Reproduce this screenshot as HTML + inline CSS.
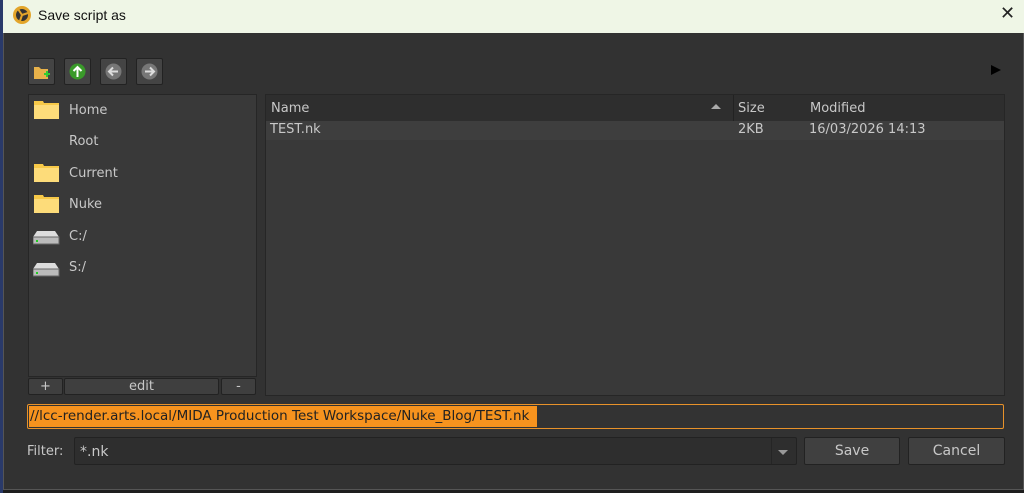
<!DOCTYPE html>
<html><head><style>
*{margin:0;padding:0;box-sizing:border-box}
body{width:1024px;height:493px;overflow:hidden;background:#1e1e1e;font-family:"DejaVu Sans",sans-serif;position:relative}
.a{position:absolute}
.t{font-size:13px;color:#c8c8c8}
.btn{background:#3f3f3f;border:1px solid #222;border-radius:2px}
</style></head><body>
<div class="a" style="left:0;top:0;width:3px;height:493px;background:#2a3a6a"></div>
<div class="a" style="left:3px;top:0;width:1021px;height:490px;background:#323232;border:1px solid #555;border-top:none"></div>
<div class="a" style="left:3px;top:0;width:1021px;height:33px;background:#eff6e6"></div>
<svg class="a" style="left:12px;top:5px" width="20" height="20"><circle cx="10" cy="10" r="9" fill="#e3a52a"/><circle cx="10" cy="10" r="6" fill="#333"/><path d="M10 10 L6 4 M10 10 L16 8 M10 10 L8 16" stroke="#e3a52a" stroke-width="2"/></svg>
<div class="a" style="left:38px;top:7px;font-size:14px;color:#111;font-family:'Liberation Sans',sans-serif">Save script as</div>
<div class="a" style="left:1000px;top:3px;font-size:18px;color:#222;font-weight:300">✕</div>
<div class="a btn" style="left:28px;top:58px;width:27px;height:27px;background:#444"><svg width="25" height="25"><path d="M5 8h5l2 2h7v10H5z" fill="#e8b24a"/><path d="M15 15h6M18 12v6" stroke="#3c3" stroke-width="2"/></svg></div>
<div class="a btn" style="left:64px;top:58px;width:27px;height:27px;background:#444"><svg width="25" height="25"><circle cx="12.5" cy="12.5" r="8" fill="#3a9a2a"/><path d="M12.5 18V8M8.5 12l4-4 4 4" stroke="#fff" stroke-width="2" fill="none"/></svg></div>
<div class="a btn" style="left:100px;top:58px;width:27px;height:27px;background:#444"><svg width="25" height="25"><circle cx="12.5" cy="12.5" r="8" fill="#777"/><path d="M17 12.5H8M12 8.5l-4 4 4 4" stroke="#ddd" stroke-width="2" fill="none"/></svg></div>
<div class="a btn" style="left:136px;top:58px;width:27px;height:27px;background:#444"><svg width="25" height="25"><circle cx="12.5" cy="12.5" r="8" fill="#777"/><path d="M8 12.5h9M13 8.5l4 4-4 4" stroke="#ddd" stroke-width="2" fill="none"/></svg></div>
<div class="a" style="left:991px;top:65px;width:0;height:0;border-left:10px solid #000;border-top:5px solid transparent;border-bottom:5px solid transparent"></div>
<div class="a" style="left:28px;top:94px;width:229px;height:283px;background:#393939;border:1px solid #262626"></div>
<svg class="a" style="left:33px;top:99px" width="28" height="160">
<g id="f"><path d="M1 2h9l1 2h15v16H1z" fill="#f7c948"/><path d="M1 6h25v14H1z" fill="#fddc7a"/></g>
<use href="#f" y="63"/><use href="#f" y="94"/>
</svg>
<svg class="a" style="left:33px;top:228px" width="28" height="60">
<g id="d"><path d="M4 3h18l4 6v6H0V9z" fill="#ddd"/><rect x="0" y="9" width="26" height="7" fill="#bbb" stroke="#666"/><rect x="3" y="12" width="2" height="2" fill="#2c2"/></g>
<use href="#d" y="32"/>
</svg>
<div class="a t" style="left:69px;top:103px">Home</div>
<div class="a t" style="left:69px;top:134px">Root</div>
<div class="a t" style="left:69px;top:166px">Current</div>
<div class="a t" style="left:69px;top:197px">Nuke</div>
<div class="a t" style="left:69px;top:229px">C:/</div>
<div class="a t" style="left:69px;top:260px">S:/</div>
<div class="a btn t" style="left:28px;top:378px;width:35px;height:17px;text-align:center;line-height:15px">+</div>
<div class="a btn t" style="left:64px;top:378px;width:155px;height:17px;text-align:center;line-height:15px">edit</div>
<div class="a btn t" style="left:221px;top:378px;width:35px;height:17px;text-align:center;line-height:15px">-</div>
<div class="a" style="left:265px;top:94px;width:740px;height:302px;background:#393939;border:1px solid #262626"></div>
<div class="a" style="left:266px;top:95px;width:738px;height:26px;background:#2e2e2e"></div>
<div class="a" style="left:733px;top:95px;width:1px;height:26px;background:#222"></div>
<div class="a t" style="left:271px;top:101px">Name</div>
<div class="a" style="left:711px;top:104px;border-bottom:5px solid #aaa;border-left:5px solid transparent;border-right:5px solid transparent"></div>
<div class="a t" style="left:738px;top:101px">Size</div>
<div class="a t" style="left:810px;top:101px">Modified</div>
<div class="a" style="left:266px;top:121px;width:738px;height:19px;background:#3e3e3e"></div>
<div class="a t" style="left:270px;top:122px">TEST.nk</div>
<div class="a t" style="left:738px;top:122px">2KB</div>
<div class="a t" style="left:809px;top:122px">16/03/2026 14:13</div>
<div class="a" style="left:27px;top:404px;width:977px;height:25px;background:#333;border:1px solid #e8922a;border-radius:2px"></div>
<div class="a" style="left:29px;top:406px;width:508px;height:21px;background:#f7931e"></div>
<div class="a" style="left:30px;top:408px;font-size:13.5px;color:#222;white-space:nowrap">//lcc-render.arts.local/MIDA Production Test Workspace/Nuke_Blog/TEST.nk</div>
<div class="a t" style="left:27px;top:444px">Filter:</div>
<div class="a" style="left:74px;top:437px;width:723px;height:28px;background:#2e2e2e;border:1px solid #222;border-radius:2px"></div>
<div class="a" style="left:771px;top:438px;width:1px;height:26px;background:#252525"></div>
<div class="a t" style="left:80px;top:444px;font-size:14px">*.nk</div>
<div class="a" style="left:778px;top:450px;border-top:5px solid #999;border-left:5px solid transparent;border-right:5px solid transparent"></div>
<div class="a btn t" style="left:804px;top:437px;width:96px;height:28px;text-align:center;line-height:26px;font-size:14px;background:#404040">Save</div>
<div class="a btn t" style="left:908px;top:437px;width:97px;height:28px;text-align:center;line-height:26px;font-size:14px;background:#404040">Cancel</div>
</body></html>
